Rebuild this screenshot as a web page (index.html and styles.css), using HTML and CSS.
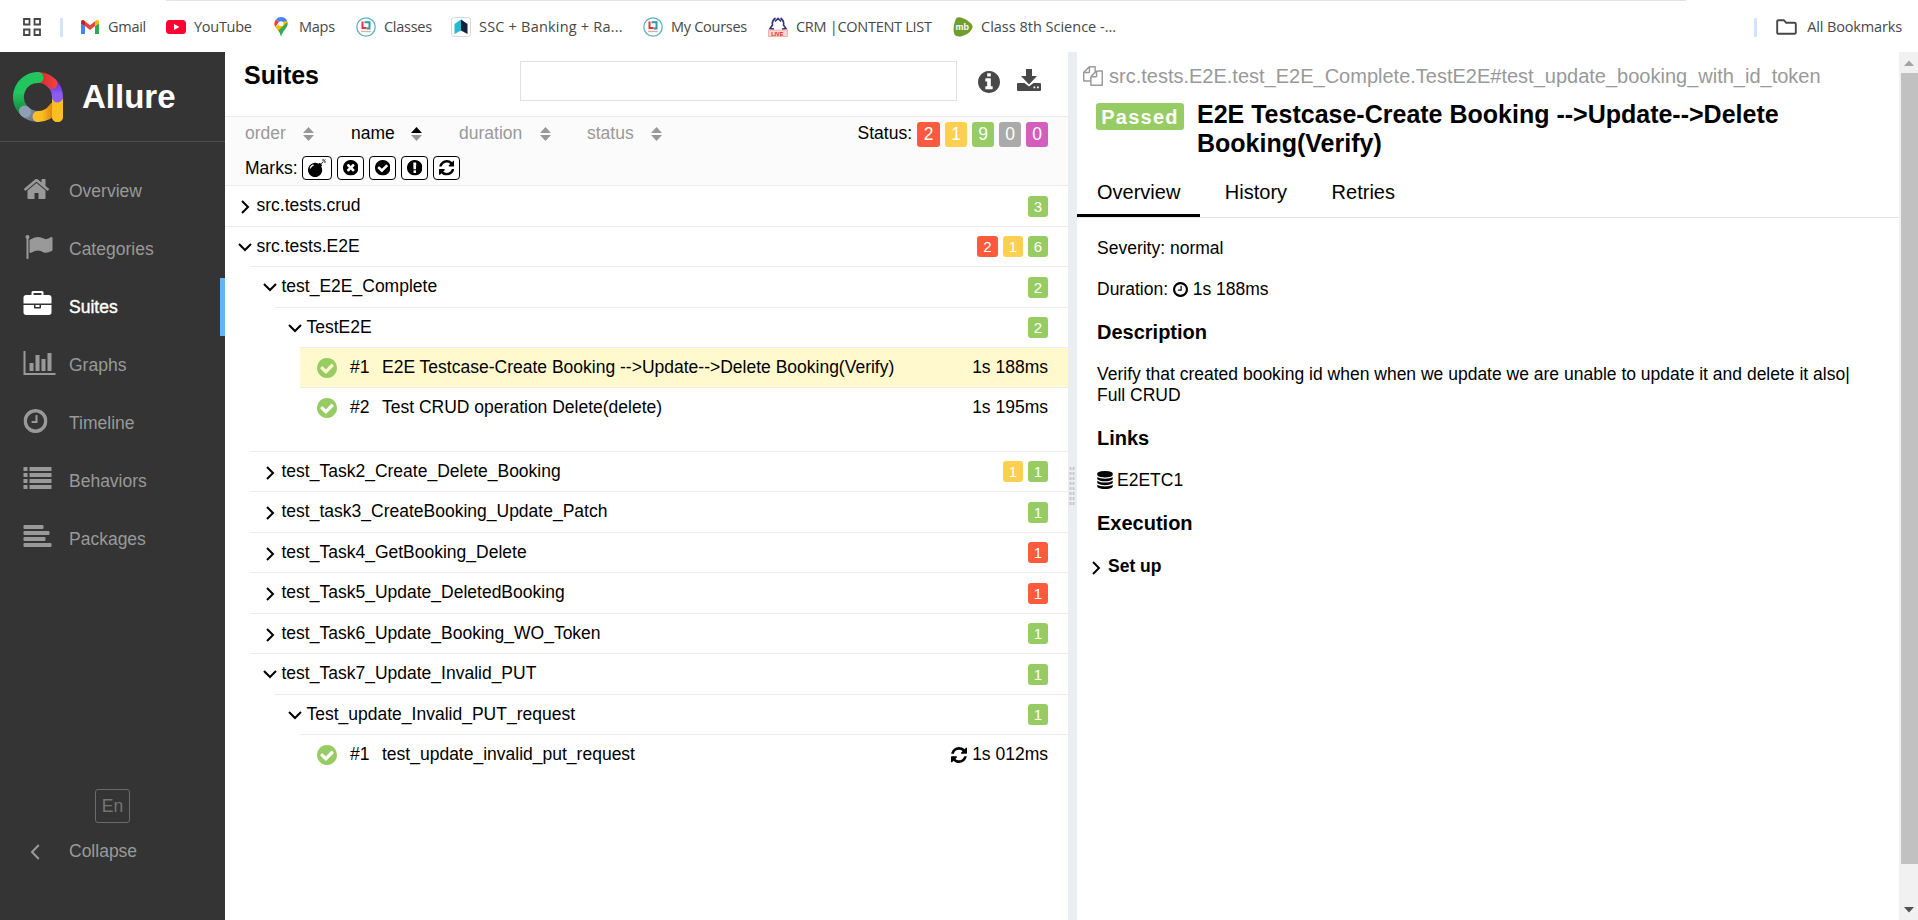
FILE: index.html
```html
<!DOCTYPE html>
<html lang="en">
<head>
<meta charset="utf-8">
<title>Allure Report</title>
<link rel="stylesheet" href="styles.css">
</head>
<body>
<svg class="defs" width="0" height="0">
<defs>
<symbol id="check" viewBox="128 128 1536 1536"><path d="M1412 734q0-28-18-46l-91-90q-19-19-45-19t-45 19l-408 407-226-226q-19-19-45-19t-45 19l-91 90q-18 18-18 46 0 27 18 45l362 362q19 19 45 19 27 0 46-19l543-543q18-18 18-45zm252 162q0 209-103 385.5t-279.5 279.5-385.5 103-385.5-103-279.5-279.5-103-385.5 103-385.5 279.5-279.5 385.5-103 385.5 103 279.5 279.5 103 385.5z"/></symbol>
<symbol id="times" viewBox="128 128 1536 1536"><path d="M1277 1122q0-26-19-45l-181-181 181-181q19-19 19-45 0-27-19-46l-90-90q-19-19-46-19-26 0-45 19l-181 181-181-181q-19-19-45-19-27 0-46 19l-90 90q-19 19-19 46 0 26 19 45l181 181-181 181q-19 19-19 45 0 27 19 46l90 90q19 19 46 19 26 0 45-19l181-181 181 181q19 19 45 19 27 0 46-19l90-90q19-19 19-46zm387-226q0 209-103 385.5t-279.5 279.5-385.5 103-385.5-103-279.5-279.5-103-385.5 103-385.5 279.5-279.5 385.5-103 385.5 103 279.5 279.5 103 385.5z"/></symbol>
<symbol id="excl" viewBox="128 128 1536 1536"><path d="M896 128q209 0 385.5 103t279.5 279.5 103 385.5-103 385.5-279.5 279.5-385.5 103-385.5-103-279.5-279.5-103-385.5 103-385.5 279.5-279.5 385.5-103zm128 1247v-190q0-14-9-23.5t-22-9.5h-192q-13 0-23 10t-10 23v190q0 13 10 23t23 10h192q13 0 22-9.5t9-23.5zm-2-344l18-621q0-12-10-18-10-8-24-8h-220q-14 0-24 8-10 6-10 18l17 621q0 10 10 17.5t24 7.5h185q14 0 23.5-7.5t10.5-17.5z"/></symbol>
<symbol id="info" viewBox="128 128 1536 1536"><path d="M1152 1376v-160q0-14-9-23t-23-9h-96v-512q0-14-9-23t-23-9h-320q-14 0-23 9t-9 23v160q0 14 9 23t23 9h96v320h-96q-14 0-23 9t-9 23v160q0 14 9 23t23 9h448q14 0 23-9t9-23zm-128-896v-160q0-14-9-23t-23-9h-192q-14 0-23 9t-9 23v160q0 14 9 23t23 9h192q14 0 23-9t9-23zm640 416q0 209-103 385.5t-279.5 279.5-385.5 103-385.5-103-279.5-279.5-103-385.5 103-385.5 279.5-279.5 385.5-103 385.5 103 279.5 279.5 103 385.5z"/></symbol>
<symbol id="clock" viewBox="128 128 1536 1536"><path d="M1024 544v448q0 14-9 23t-23 9h-320q-14 0-23-9t-9-23v-64q0-14 9-23t23-9h224v-352q0-14 9-23t23-9h64q14 0 23 9t9 23zm416 352q0-148-73-273t-198-198-273-73-273 73-198 198-73 273 73 273 198 198 273 73 273-73 198-198 73-273zm224 0q0 209-103 385.5t-279.5 279.5-385.5 103-385.5-103-279.5-279.5-103-385.5 103-385.5 279.5-279.5 385.5-103 385.5 103 279.5 279.5 103 385.5z"/></symbol>
<symbol id="refresh" viewBox="128 128 1536 1536"><path d="M1639 1056q0 5-1 7-64 268-268 434.5t-478 166.5q-146 0-282.5-55t-243.5-157l-129 129q-19 19-45 19t-45-19-19-45v-448q0-26 19-45t45-19h448q26 0 45 19t19 45-19 45l-137 137q71 66 161 102t187 36q134 0 250-65t186-179q11-17 53-117 8-23 30-23h192q13 0 22.5 9.5t9.5 22.5zm25-800v448q0 26-19 45t-45 19h-448q-26 0-45-19t-19-45 19-45l138-138q-148-137-349-137-134 0-250 65t-186 179q-11 17-53 117-8 23-30 23h-199q-13 0-22.5-9.5t-9.5-22.5v-7q65-268 270-434.5t480-166.5q146 0 284 55.5t245 156.5l130-129q19-19 45-19t45 19 19 45z"/></symbol>
<symbol id="bomb" viewBox="0 0 1792 1792"><path d="M571 589q-10-25-34-35t-49 0q-108 44-191 127t-127 191q-10 25 0 49t35 34q13 5 24 5 42 0 60-40 34-84 98.5-148.5t148.5-98.5q25-11 35-35t0-49zm942-356l46 46-244 243 68 68q19 19 19 45.5t-19 45.5l-64 64q89 161 89 343 0 143-55.5 273.5t-150 225-225 150-273.5 55.5-273.5-55.5-225-150-150-225-55.5-273.5 55.5-273.5 150-225 225-150 273.5-55.5q182 0 343 89l64-64q19-19 45.5-19t45.5 19l68 68zm8-56q-10 10-22 10-13 0-23-10l-91-90q-9-10-9-23t9-23q10-9 23-9t23 9l90 91q10 9 10 22.5t-10 22.5zm230 230q-11 9-23 9t-23-9l-90-91q-10-9-10-22.5t10-22.5q9-10 22.5-10t22.5 10l91 90q9 10 9 23t-9 23zm41-183q0 14-9 23t-23 9h-96q-14 0-23-9t-9-23 9-23 23-9h96q14 0 23 9t9 23zm-192-192v96q0 14-9 23t-23 9-23-9-9-23v-96q0-14 9-23t23-9 23 9 9 23zm151 55l-91 90q-10 10-22 10-13 0-23-10-10-9-10-22.5t10-22.5l90-91q10-9 23-9t23 9q9 10 9 23t-9 23z"/></symbol>
<symbol id="right" viewBox="0 0 14 14"><path d="M4 1l6 6-6 6" fill="none" stroke="currentColor" stroke-width="2"/></symbol>
<symbol id="down" viewBox="0 0 14 14"><path d="M1 3l6 6 6-6" fill="none" stroke="currentColor" stroke-width="2"/></symbol>
<symbol id="course" viewBox="0 0 20 20"><circle cx="10" cy="10" r="9.2" fill="#fff" stroke="#5fb3bd" stroke-width="1.3"/><path d="M6.5 4.500v6.500h4" fill="none" stroke="#e8323c" stroke-width="2"/><path d="M8.500 5.300h5v6.200h-3" fill="none" stroke="#2b9aa8" stroke-width="2"/><path d="M5 14.500h10" stroke="#eda6a6" stroke-width="1.300"/></symbol>
</defs>
</svg>

<header class="bookmarks">
  <div class="topline"></div>
  <svg class="apps" viewBox="0 0 18 18"><path d="M1 1h5.500v5.500H1zM11.500 1H17v5.500h-5.500zM1 11.500h5.500V17H1zM11.500 11.500H17V17h-5.500z" fill="none" stroke="#474747" stroke-width="1.800"/></svg>
  <i class="sep"></i>
  <div class="bm gmail"><svg viewBox="0 0 20 20"><path d="M1 17V6l4 3v8z" fill="#4285f4"/><path d="M15 17V9l4-3v11z" fill="#34a853"/><path d="M15 9V4l1.500-1Q19 2.500 19 5v1.500z" fill="#fbbc04"/><path d="M5 4.300l5 4 5-4V9l-5 4-5-4z" fill="#ea4335"/><path d="M1 6.500V5q0-2.500 2.500-2L5 4.300V9z" fill="#c5221f"/></svg><span>Gmail</span></div>
  <div class="bm youtube"><svg viewBox="0 0 20 20"><rect y="3" width="20" height="14" rx="3.500" fill="#f03"/><path d="M8 7l5.500 3L8 13z" fill="#fff"/></svg><span>YouTube</span></div>
  <div class="bm maps"><svg viewBox="0 0 20 20"><path d="M4.900 2.400L8 5l-3.700 5Q3.300 8.500 3.300 6.700 3.300 4 4.900 2.400z" fill="#ea4335"/><path d="M4.900 2.400Q7 0 10 0q4.500 0 6.200 4L12 8z" fill="#4285f4"/><path d="M16.200 4q1.300 3.500-1.200 7l-7.600 3.200L4.300 10 11 5z" fill="#fbbc04"/><path d="M16.400 5Q17.200 8 15 11q-2 2.500-3.500 5T10 20c-.6-3-1.400-4.500-2.800-6.200z" fill="#34a853"/><circle cx="10" cy="6.700" r="2.500" fill="#fff"/></svg><span>Maps</span></div>
  <div class="bm classes"><svg viewBox="0 0 20 20"><use href="#course"/></svg><span>Classes</span></div>
  <div class="bm ssc"><svg viewBox="0 0 20 20"><rect x=".5" y=".5" width="19" height="19" rx="2" fill="#fff" stroke="#d5d9de"/><path d="M3.500 7L10 2.500v11L3.500 17z" fill="#27b8d2"/><path d="M10 2.500L16.500 7v10L10 13.500z" fill="#14203c"/></svg><span>SSC + Banking + Ra...</span></div>
  <div class="bm courses"><svg viewBox="0 0 20 20"><use href="#course"/></svg><span>My Courses</span></div>
  <div class="bm crm"><svg viewBox="0 0 20 20"><path d="M7.500 1Q3.500 4 4.500 8L2 11.500l4 .5M12.500 1q4 3 3 7l2.500 3.500-4 .5M7 4.500l3-3 3 3" fill="none" stroke="#35307f" stroke-width="1.600"/><rect x=".5" y="13" width="19" height="6.500" fill="#fbd6d4" stroke="#ee8a85" stroke-width=".6"/><text x="3.200" y="18.600" class="live">LIVE</text></svg><span>CRM |CONTENT LIST</span></div>
  <div class="bm mb"><svg viewBox="0 0 20 20"><path d="M3 1.500Q5-.5 9 .8q5 1.500 9 5.700 3 3 .3 6.500-3 4.500-9 6-6 1.500-7.800-1.500Q-1 11 3 1.500z" fill="#719d2c"/><text x="2.500" y="13" class="mbt">mb</text></svg><span>Class 8th Science -...</span></div>
  <i class="sep end"></i>
  <svg class="folder" viewBox="0 0 21 17"><path d="M1.200 13.500v-11q0-1.300 1.300-1.300h5.300l2.400 2.500h8.300q1.300 0 1.300 1.300v8.500q0 1.300-1.300 1.300h-16q-1.300 0-1.300-1.300z" fill="none" stroke="#474747" stroke-width="1.900"/></svg>
  <span class="all">All Bookmarks</span>
</header>

<div class="app">
<aside class="side">
  <div class="brand">
    <svg class="logo" viewBox="0 0 50 50">
      <defs>
        <linearGradient id="lg" gradientUnits="userSpaceOnUse" x1="0" y1="0" x2="0" y2="42"><stop offset=".5" stop-color="#22c55e"/><stop offset="1" stop-color="#15803d"/></linearGradient>
        <linearGradient id="lr" gradientUnits="userSpaceOnUse" x1="25" y1="0" x2="44" y2="0"><stop offset="0" stop-color="#dc2626"/><stop offset="1" stop-color="#ef4444"/></linearGradient>
        <linearGradient id="lp" gradientUnits="userSpaceOnUse" x1="0" y1="10" x2="0" y2="30"><stop offset="0" stop-color="#6d28d9"/><stop offset=".6" stop-color="#8b5cf6"/></linearGradient>
        <linearGradient id="ls" gradientUnits="userSpaceOnUse" x1="6" y1="34" x2="24" y2="48"><stop offset="0" stop-color="#94a3b8"/><stop offset="1" stop-color="#64748b"/></linearGradient>
        <linearGradient id="ly" gradientUnits="userSpaceOnUse" x1="20" y1="0" x2="42" y2="0"><stop offset=".4" stop-color="#fbbf24"/><stop offset="1" stop-color="#d97706"/></linearGradient>
      </defs>
      <g fill="none" stroke-width="11" stroke-linecap="round">
        <path d="M44.500 33v11.500" stroke="#fbbf24" stroke-linecap="round"/>
        <path d="M11.500 39A19.500 19.500 0 0 0 25 44.500" stroke="url(#ls)"/>
        <path d="M25 44.500A19.500 19.500 0 0 0 41 36" stroke="url(#ly)"/>
        <path d="M44.500 28v16.500" stroke="#fbbf24"/>
        <path d="M44.500 25a19.500 19.500 0 0 0-6-14" stroke="url(#lp)"/>
        <path d="M39 11.500A19.500 19.500 0 0 0 25 5.500" stroke="url(#lr)"/>
        <path d="M10 37.500A19.500 19.500 0 0 1 25 5.500" stroke="url(#lg)"/>
        <path d="M11.500 39l1 1" stroke="#8fa0b4"/>
      </g>
    </svg>
    <span>Allure</span>
  </div>
  <nav>
    <div class="nav"><svg viewBox="64 0 1792 1792"><path d="M1472 992v480q0 26-19 45t-45 19h-384v-384h-256v384h-384q-26 0-45-19t-19-45v-480q0-1 .5-3t.5-3l575-474 575 474q1 2 1 6zm223-69l-62 74q-8 9-21 11h-3q-13 0-21-7l-692-577-692 577q-12 8-24 7-13-2-21-11l-62-74q-8-10-7-23.500t11-21.500l719-599q32-26 76-26t76 26l244 204v-195q0-14 9-23t23-9h192q14 0 23 9t9 23v408l219 182q10 8 11 21.500t-7 23.500z"/></svg><span>Overview</span></div>
    <div class="nav"><svg viewBox="-64 0 1792 1792"><path d="M320 256q0 72-64 110v1266q0 13-9.500 22.500t-22.500 9.500h-64q-13 0-22.500-9.500t-9.500-22.500v-1266q-64-38-64-110 0-53 37.500-90.500t90.500-37.500 90.500 37.500 37.500 90.500zm1472 64v763q0 25-12.500 38.500t-39.500 27.500q-215 116-369 116-61 0-123.500-22t-108.500-48-115.500-48-142.500-22q-192 0-464 146-17 9-33 9-26 0-45-19t-19-45v-742q0-32 31-55 21-14 79-43 236-120 421-120 107 0 200 29t219 88q38 19 88 19 54 0 117.500-21t110-47 88-47 54.500-21q26 0 45 19t19 45z"/></svg><span>Categories</span></div>
    <div class="nav on"><svg viewBox="0 0 1792 1792"><path d="M640 256h512v-128h-512v128zm1152 640v480q0 66-47 113t-113 47h-1472q-66 0-113-47t-47-113v-480h672v160q0 26 19 45t45 19h320q26 0 45-19t19-45v-160h672zm-768 0v128h-256v-128h256zm768-480v384h-1792v-384q0-66 47-113t113-47h352v-160q0-40 28-68t68-28h576q40 0 68 28t28 68v160h352q66 0 113 47t47 113z"/></svg><span>Suites</span></div>
    <div class="nav"><svg viewBox="0 0 1792 1792"><path d="M640 896v512h-256v-512h256zm384-512v1024h-256v-1024h256zm1024 1152v128h-2048v-1536h128v1408h1920zm-640-896v768h-256v-768h256zm384-384v1152h-256v-1152h256z"/></svg><span>Graphs</span></div>
    <div class="nav"><svg viewBox="0 0 1792 1792"><use href="#clock" x="0" y="128" width="1536" height="1536"/></svg><span>Timeline</span></div>
    <div class="nav"><svg viewBox="0 0 28 28"><path d="M0 2h4v4H0zM6 2h22v4H6zM0 8h4v4H0zM6 8h22v4H6zM0 14h4v4H0zM6 14h22v4H6zM0 20h4v4H0zM6 20h22v4H6z"/></svg><span>Behaviors</span></div>
    <div class="nav"><svg viewBox="0 0 28 28"><path d="M1 2h18q1 0 1 1v2q0 1-1 1H1Q0 6 0 5V3q0-1 1-1zM1 8h24q1 0 1 1v2q0 1-1 1H1q-1 0-1-1V9q0-1 1-1zM1 14h20q1 0 1 1v2q0 1-1 1H1q-1 0-1-1v-2q0-1 1-1zM1 20h26q1 0 1 1v2q0 1-1 1H1q-1 0-1-1v-2q0-1 1-1z"/></svg><span>Packages</span></div>
  </nav>
  <div class="lang">En</div>
  <div class="collapse"><svg viewBox="0 0 10 16"><path d="M8.800 1L2 8l6.800 7" fill="none" stroke="currentColor" stroke-width="2"/></svg><span>Collapse</span></div>
</aside>

<main class="tree">
  <div class="head"><h1>Suites</h1><div class="search"></div>
    <svg class="hinfo"><use href="#info"/></svg>
    <svg class="hdown" viewBox="0 0 24 22"><path d="M9 0h6v7h5l-8 8.500L4 7h5z"/><path fill-rule="evenodd" d="M1 14h6.500l4.500 3.500 4.500-3.500H23q1 0 1 1v6q0 1-1 1H1q-1 0-1-1v-6q0-1 1-1zM16.500 17.500v1.800h1.800v-1.800zM20 17.500v1.800h1.800v-1.800z"/></svg>
  </div>
  <div class="filters">
    <div class="line1">
      <div class="sort s1">order<svg viewBox="0 0 11 14"><path d="M0 6l5.500-6L11 6zM0 8h11l-5.500 6z"/></svg></div>
      <div class="sort s2 act">name<svg viewBox="0 0 11 14"><path d="M0 6l5.500-6L11 6z" fill="#000"/><path d="M0 8h11l-5.500 6z" fill="#999"/></svg></div>
      <div class="sort s3">duration<svg viewBox="0 0 11 14"><path d="M0 6l5.500-6L11 6zM0 8h11l-5.500 6z"/></svg></div>
      <div class="sort s4">status<svg viewBox="0 0 11 14"><path d="M0 6l5.500-6L11 6zM0 8h11l-5.500 6z"/></svg></div>
      <div class="stat"><span>Status:</span><b class="fail">2</b><b class="brok">1</b><b class="pass">9</b><b class="skip">0</b><b class="unk">0</b></div>
    </div>
    <div class="marks"><span>Marks:</span>
      <div class="mk wide"><svg><use href="#bomb"/></svg></div><div class="mk"><svg><use href="#times"/></svg></div><div class="mk"><svg><use href="#check"/></svg></div><div class="mk"><svg><use href="#excl"/></svg></div><div class="mk"><svg><use href="#refresh"/></svg></div>
    </div>
  </div>
  <div class="rows">
    <div class="row"><svg><use href="#right"/></svg><span>src.tests.crud</span><b class="pass">3</b></div>
    <div class="row"><svg><use href="#down"/></svg><span>src.tests.E2E</span><b class="fail">2</b><b class="brok">1</b><b class="pass">6</b></div>
    <div class="kids">
      <div class="row"><svg><use href="#down"/></svg><span>test_E2E_Complete</span><b class="pass">2</b></div>
      <div class="kids">
        <div class="row"><svg><use href="#down"/></svg><span>TestE2E</span><b class="pass">2</b></div>
        <div class="kids last">
          <div class="leaf sel"><svg class="ok"><use href="#check"/></svg><em>#1</em><span>E2E Testcase-Create Booking --&gt;Update--&gt;Delete Booking(Verify)</span><time>1s 188ms</time></div>
          <div class="leaf"><svg class="ok"><use href="#check"/></svg><em>#2</em><span>Test CRUD operation Delete(delete)</span><time>1s 195ms</time></div>
        </div>
      </div>
      <div class="row"><svg><use href="#right"/></svg><span>test_Task2_Create_Delete_Booking</span><b class="brok">1</b><b class="pass">1</b></div>
      <div class="row"><svg><use href="#right"/></svg><span>test_task3_CreateBooking_Update_Patch</span><b class="pass">1</b></div>
      <div class="row"><svg><use href="#right"/></svg><span>test_Task4_GetBooking_Delete</span><b class="fail">1</b></div>
      <div class="row"><svg><use href="#right"/></svg><span>test_Task5_Update_DeletedBooking</span><b class="fail">1</b></div>
      <div class="row"><svg><use href="#right"/></svg><span>test_Task6_Update_Booking_WO_Token</span><b class="pass">1</b></div>
      <div class="row"><svg><use href="#down"/></svg><span>test_Task7_Update_Invalid_PUT</span><b class="pass">1</b></div>
      <div class="kids">
        <div class="row"><svg><use href="#down"/></svg><span>Test_update_Invalid_PUT_request</span><b class="pass">1</b></div>
        <div class="kids">
          <div class="leaf"><svg class="ok"><use href="#check"/></svg><em>#1</em><span>test_update_invalid_put_request</span><svg class="rf"><use href="#refresh"/></svg><time>1s 012ms</time></div>
        </div>
      </div>
    </div>
  </div>
</main>

<div class="gutter"><svg viewBox="0 0 6 38"><path d="M1.500 0v38M4.500 0v38" stroke="#c6c9cb" stroke-width="2" stroke-dasharray="3 2"/></svg></div>

<section class="detail">
  <div class="path"><svg viewBox="0 0 1792 1792"><path d="M1696 384q40 0 68 28t28 68v1216q0 40-28 68t-68 28h-960q-40 0-68-28t-28-68v-288h-544q-40 0-68-28t-28-68v-672q0-40 20-88t48-76l408-408q28-28 76-48t88-20h416q40 0 68 28t28 68v328q68-40 128-40h416zm-544 213l-299 299h299v-299zm-640-384l-299 299h299v-299zm196 647l316-316v-416h-384v416q0 40-28 68t-68 28h-416v640h512v-256q0-40 20-88t48-76zm956 804v-1152h-384v416q0 40-28 68t-68 28h-416v640h896z"/></svg><span>src.tests.E2E.test_E2E_Complete.TestE2E#test_update_booking_with_id_token</span></div>
  <div class="title"><b>Passed</b><h2>E2E Testcase-Create Booking --&gt;Update--&gt;Delete<br>Booking(Verify)</h2></div>
  <div class="tabs"><div class="tab cur">Overview</div><div class="tab">History</div><div class="tab">Retries</div></div>
  <div class="body">
    <p>Severity: normal</p>
    <p class="dur">Duration: <svg><use href="#clock"/></svg> 1s 188ms</p>
    <h3>Description</h3>
    <p class="desc">Verify that created booking id when when we update we are unable to update it and delete it also|<br>Full CRUD</p>
    <h3>Links</h3>
    <p class="link"><svg viewBox="128 0 1536 1792"><path d="M896 768q237 0 443-43t325-127v170q0 69-103 128t-280 93.500-385 34.500-385-34.500-280-93.500-103-128v-170q119 84 325 127t443 43zm0 768q237 0 443-43t325-127v170q0 69-103 128t-280 93.500-385 34.500-385-34.500-280-93.500-103-128v-170q119 84 325 127t443 43zm0-384q237 0 443-43t325-127v170q0 69-103 128t-280 93.500-385 34.500-385-34.500-280-93.500-103-128v-170q119 84 325 127t443 43zm0-1152q208 0 385 34.500t280 93.500 103 128v128q0 69-103 128t-280 93.500-385 34.500-385-34.500-280-93.500-103-128v-128q0-69 103-128t280-93.500 385-34.500z"/></svg>E2ETC1</p>
    <h3>Execution</h3>
    <div class="setup"><svg><use href="#right"/></svg><b>Set up</b></div>
  </div>
</section>

<div class="scroll"><svg viewBox="0 0 10 6"><path d="M0 6l5-5.500L10 6z" fill="#a3a3a3"/></svg><div class="thumb"></div><svg viewBox="0 0 10 6"><path d="M0 0l5 5.500L10 0z" fill="#505050"/></svg></div>
</div>
</body>
</html>
```
FILE: styles.css
```css
* { box-sizing: border-box; margin: 0; padding: 0; }
body { width: 1918px; height: 920px; overflow: hidden; background: #fff; color: #000; font: 17.5px/21px "Liberation Sans", Arial, sans-serif; }
svg { display: block; flex: none; fill: currentColor; }
.defs { position: absolute; }

.bookmarks { position: relative; height: 52px; display: flex; align-items: center; padding: 2px 16px 0 23px; font: 14.5px/20px "Open Sans", "Noto Sans", sans-serif; letter-spacing: -0.28px; color: #474747; white-space: nowrap; }
.topline { position: absolute; left: 166px; top: 0; width: 1520px; height: 1px; background: #dfe3ee; }
.apps { width: 18px; height: 18px; margin-right: 19px; }
.sep { width: 3px; height: 19px; background: #d3e3fd; border-radius: 1px; margin-right: 18px; }
.sep.end { margin: 0 19px 0 auto; }
.bm { display: flex; align-items: center; gap: 8px; }
.bm svg { width: 20px; height: 20px; }
.gmail { width: 86px; margin-left: -1px; }
.youtube { width: 105px; }
.maps { width: 85px; }
.classes { width: 95px; }
.ssc { width: 192px; letter-spacing: 0.2px; }
.courses { width: 125px; }
.crm { width: 185px; }
.mb { letter-spacing: 0; }
.all { letter-spacing: -0.15px; }
.folder { width: 21px; height: 17px; margin-right: 10px; }
.live { font: bold 5.500px "Liberation Sans", sans-serif; letter-spacing: 0; fill: #e0221c; }
.mbt { font: bold 9px "Liberation Sans", sans-serif; letter-spacing: 0; fill: #fff; }

.app { display: flex; height: 868px; }
.side { width: 225px; background: #343434; color: #999; display: flex; flex-direction: column; }
.brand { height: 90px; border-bottom: 1px solid #4f4f4f; display: flex; align-items: flex-start; padding: 20px 0 0 13px; color: #fff; font: bold 33px/40px "Liberation Sans", Arial, sans-serif; }
.logo { width: 50px; height: 50px; margin-right: 19px; }
.brand span { padding-top: 5px; }
nav { padding-top: 20px; }
.nav { height: 58px; display: flex; align-items: flex-start; padding: 13px 0 0 23px; }
.nav svg { width: 29px; height: 28px; margin-right: 17px; overflow: visible; }
.nav span { line-height: 32px; }
.on { color: #fff; border-right: 5px solid #64b5f6; }
.on span { -webkit-text-stroke: 0.4px #fff; }
.lang { width: 35px; height: 34px; margin: 221px 0 0 95px; border: 1px solid #6a6a6a; border-radius: 3px; text-align: center; line-height: 33px; color: #747474; }
.collapse { display: flex; align-items: center; gap: 29px; margin: 17px 0 0 30px; height: 23px; }
.collapse svg { width: 10px; height: 16px; }

.tree { width: 843px; white-space: nowrap; }
.head { display: flex; height: 64px; align-items: flex-start; padding: 9px 0 0 19px; color: #484848; }
h1 { font-size: 25px; line-height: 28px; width: 276px; color: #000; }
.search { width: 437px; height: 40px; border: 1px solid #e0e0e0; }
.hinfo { width: 22px; height: 22px; margin: 10px 17px 0 21px; }
.hdown { width: 24px; height: 22px; margin-top: 8px; }
.filters { border-top: 1px solid #e8e9ea; background: #fbfbfb; height: 69px; padding-left: 20px; }
.line1 { display: flex; height: 32px; align-items: center; color: #999; padding-top: 1px; }
.sort { display: flex; justify-content: space-between; align-items: center; }
.sort svg { width: 11px; height: 14px; margin-top: 1px; }
.act { color: #000; }
.s1 { width: 69px; margin-right: 37px; }
.s2 { width: 71px; margin-right: 37px; }
.s3 { width: 92px; margin-right: 36px; }
.s4 { width: 75px; }
.stat { display: flex; gap: 5px; margin: 0 20px 0 auto; align-items: center; color: #000; }
.stat b { height: 25px; min-width: 22px; padding-top: 2px; margin-top: 1px; font-size: 17.5px; }
.stat b:nth-of-type(1) { width: 23px; }
b[class] { border-radius: 3px; color: #fff; font-weight: normal; text-align: center; }
.fail { background: #fd5a3e; }
.brok { background: #ffd050; }
.pass { background: #97cc64; }
.skip { background: #aaa; }
.unk { background: #d35ebe; }
.marks { display: flex; gap: 5px; align-items: center; height: 24px; margin-top: 7px; }
.marks span { width: 52px; }
.mk { width: 27px; height: 24px; border: 1px solid #000; border-radius: 4px; display: grid; place-items: center; background: #fff; }
.mk svg { width: 15.5px; height: 15.5px; }
.wide { width: 30px; }
.wide svg { width: 18px; height: 18px; }

.rows { margin-top: 0.49px; }
.row, .leaf { height: 40.5px; border-top: 1px solid #e8edf0; display: flex; align-items: center; gap: 5px; padding: 1px 20px 0 12.5px; }
.row svg { width: 14px; height: 14px; margin-top: 1px; }
.row span { flex: 1; padding-bottom: 2px; }
.row b { width: 20px; height: 21px; font-size: 15px; line-height: 22px; margin-top: -0.5px; }
.row .fail:not(:last-child) { width: 21px; }
.kids { margin-left: 25px; }
.kids.last { padding-bottom: 23.500px; }
.leaf { padding: 0 20px 0 17px; gap: 0; height: 40px; }
.leaf.sel { background: #fff9cd; }
.ok { width: 20px; height: 20px; color: #97cc64; }
.leaf em { font-style: normal; width: 32px; margin-left: 13px; }
.leaf span { flex: 1; }
.rf { width: 16px; height: 16px; margin-right: 5px; }

.gutter { width: 9px; background: #eaeef1; display: flex; align-items: center; padding-left: 1px; }
.gutter svg { width: 6px; height: 38px; }

.detail { width: 822px; white-space: nowrap; }
.path { display: flex; align-items: center; gap: 6px; height: 24px; margin: 12px 0 0 6px; color: #999; font-size: 20px; }
.path svg { width: 20px; height: 20px; }
.title { display: flex; margin: 12px 0 0 19px; }
.title b { width: 88px; height: 27px; margin: 3px 13px 0 0; background: #97cc64; color: #fff; border-radius: 3px; font-size: 20px; line-height: 28px; letter-spacing: 1.25px; text-align: center; }
h2 { font-size: 25px; line-height: 29px; }
.tabs { display: flex; gap: 4.5px; height: 49px; margin-top: 11px; border-bottom: 1px solid #e5e5e5; font-size: 20px; line-height: 46px; }
.tab { padding: 0 20px; height: 48px; }
.cur { border-bottom: 3px solid #000; }
.body { padding: 20px 0 0 20px; }
.body p { margin-bottom: 20px; }
.body svg { display: inline-block; }
.dur svg { width: 15px; height: 15px; vertical-align: -2px; }
h3 { font-size: 20px; line-height: 24px; margin-bottom: 20px; }
.link svg { width: 16px; height: 18px; margin-right: 4px; vertical-align: -3px; }
.setup { display: flex; align-items: center; margin: 21px 0 0 -8px; }
.setup svg { width: 14px; height: 14px; margin: 2px 5px 0 0; }

.scroll { width: 19px; background: #f1f1f1; display: flex; flex-direction: column; align-items: center; padding: 8px 0 7px 1px; }
.scroll svg { width: 10px; height: 6px; }
.thumb { width: 17px; height: 791px; background: #c1c1c1; margin: 7px 0 auto 1px; }
```
